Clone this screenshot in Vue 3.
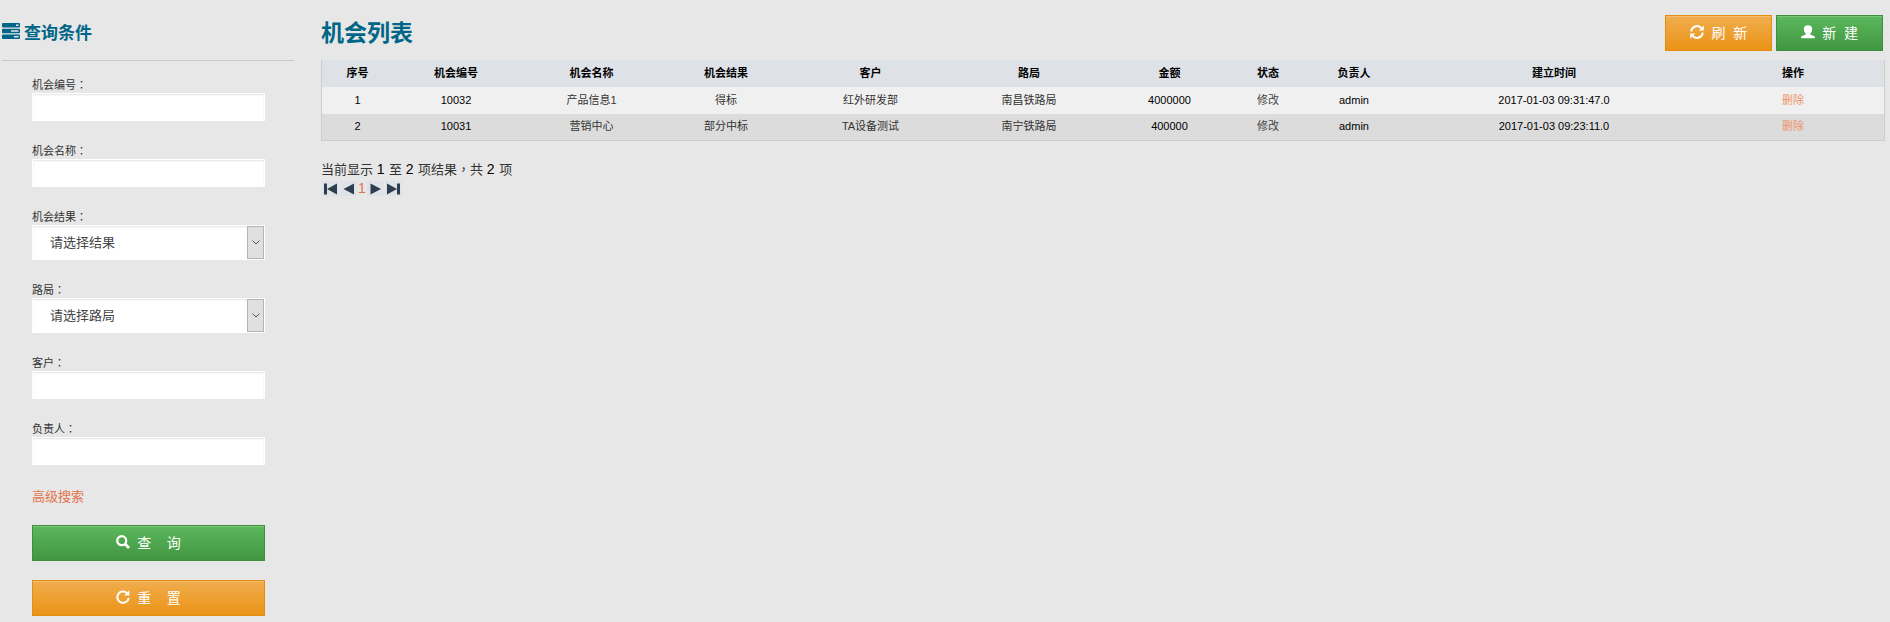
<script setup>
import { reactive } from 'vue'

const fields = [
  { id: 'code', label: '机会编号', type: 'text' },
  { id: 'name', label: '机会名称', type: 'text' },
  { id: 'result', label: '机会结果', type: 'select', placeholder: '请选择结果' },
  { id: 'bureau', label: '路局', type: 'select', placeholder: '请选择路局' },
  { id: 'customer', label: '客户', type: 'text' },
  { id: 'owner', label: '负责人', type: 'text' },
]

const query = reactive({ code: '', name: '', result: '', bureau: '', customer: '', owner: '' })

const columns = [
  { title: '序号', share: 71 },
  { title: '机会编号', share: 126 },
  { title: '机会名称', share: 145 },
  { title: '机会结果', share: 124 },
  { title: '客户', share: 165 },
  { title: '路局', share: 152 },
  { title: '金额', share: 129 },
  { title: '状态', share: 68 },
  { title: '负责人', share: 104 },
  { title: '建立时间', share: 296 },
  { title: '操作', share: 182 },
]
const total = columns.reduce((sum, c) => sum + c.share, 0)

const rows = [
  { no: 1, code: '10032', name: '产品信息1', result: '得标', customer: '红外研发部', bureau: '南昌铁路局', amount: '4000000', owner: 'admin', created: '2017-01-03 09:31:47.0' },
  { no: 2, code: '10031', name: '营销中心', result: '部分中标', customer: 'TA设备测试', bureau: '南宁铁路局', amount: '400000', owner: 'admin', created: '2017-01-03 09:23:11.0' },
]

function reset() {
  Object.keys(query).forEach((key) => { query[key] = '' })
}
</script>

<template>
  <div class="page">
    <aside class="sidebar">
      <h2 class="side-title">
        <svg class="title-icon" viewBox="0 0 18 16" aria-hidden="true">
          <rect x="0" y="0" width="18" height="4.500" rx="1" />
          <rect x="0" y="5.750" width="18" height="4.500" rx="1" />
          <rect x="0" y="11.500" width="18" height="4.500" rx="1" />
          <path class="hole" d="M14 1.500h2.500V3H14zM9 7.250h7.500v1.500H9zM12 13h4.500v1.500H12z" />
        </svg>
        <span>查询条件</span>
      </h2>
      <form class="filters" @submit.prevent>
        <div v-for="f in fields" :key="f.id" class="field">
          <label :for="f.id">{{ f.label }}<span class="punct">：</span></label>
          <input v-if="f.type === 'text'" :id="f.id" v-model="query[f.id]" type="text" class="control">
          <div v-else class="select-box">
            <select :id="f.id" v-model="query[f.id]" class="control">
              <option value="">{{ f.placeholder }}</option>
            </select>
            <span class="drop">
              <svg viewBox="0 0 8 5" aria-hidden="true"><path d="M.5.5 4 4 7.5.5" /></svg>
            </span>
          </div>
        </div>
        <a href="#" class="advanced">高级搜索</a>
        <button type="submit" class="btn green wide">
          <svg viewBox="0 0 14 14" aria-hidden="true">
            <circle cx="5.7" cy="5.7" r="4.5" fill="none" stroke="currentColor" stroke-width="2.2" />
            <path d="M9 9l4 4" stroke="currentColor" stroke-width="2.8" />
          </svg>
          <span>查&nbsp;&nbsp;&nbsp;&nbsp;询</span>
        </button>
        <button type="button" class="btn orange wide" @click="reset">
          <svg viewBox="0 0 14 14" aria-hidden="true">
            <path d="M10.800 2.800A5.700 5.700 0 1 0 12.700 8" fill="none" stroke="currentColor" stroke-width="2" />
            <path d="M13.400.2v5.300H8.100z" fill="currentColor" />
          </svg>
          <span>重&nbsp;&nbsp;&nbsp;&nbsp;置</span>
        </button>
      </form>
    </aside>

    <main class="content">
      <header class="top">
        <h1>机会列表</h1>
        <div class="actions">
          <button type="button" class="btn orange">
            <svg viewBox="0 0 14 14" aria-hidden="true">
              <path d="M1.200 6.400A5.800 5.800 0 0 1 11.200 3M12.800 7.600A5.800 5.800 0 0 1 2.800 11" fill="none" stroke="currentColor" stroke-width="2" />
              <path d="M13.800.4v5H8.800zM.2 13.600v-5h5z" fill="currentColor" />
            </svg>
            <span>刷&nbsp;&nbsp;新</span>
          </button>
          <button type="button" class="btn green">
            <svg viewBox="0 0 14 14" aria-hidden="true">
              <path d="M7 .3C9.900.3 11.300 1.900 11.200 4.400 11.100 6.200 10.400 7.500 9.300 8.400c-.2.900.2 1.300 1.100 1.600l2.500 1c.8.4 1.100 1 1.100 2.300H0c0-1.300.3-1.900 1.100-2.300l2.500-1c.9-.3 1.300-.7 1.100-1.600C3.600 7.500 2.900 6.200 2.800 4.400 2.700 1.900 4.100.3 7 .3z" fill="currentColor" />
            </svg>
            <span>新&nbsp;&nbsp;建</span>
          </button>
        </div>
      </header>

      <table class="grid">
        <colgroup>
          <col v-for="c in columns" :key="c.title" :style="{ width: (c.share / total) * 100 + '%' }">
        </colgroup>
        <thead>
          <tr><th v-for="c in columns" :key="c.title" scope="col">{{ c.title }}</th></tr>
        </thead>
        <tbody>
          <tr v-for="r in rows" :key="r.no">
            <td>{{ r.no }}</td>
            <td>{{ r.code }}</td>
            <td class="soft">{{ r.name }}</td>
            <td class="soft">{{ r.result }}</td>
            <td class="soft">{{ r.customer }}</td>
            <td class="soft">{{ r.bureau }}</td>
            <td>{{ r.amount }}</td>
            <td><a href="#" class="edit">修改</a></td>
            <td>{{ r.owner }}</td>
            <td>{{ r.created }}</td>
            <td><a href="#" class="remove">删除</a></td>
          </tr>
        </tbody>
      </table>

      <p class="summary">当前显示 <b>1</b> 至 <b>2</b> 项结果<span class="punct">，</span>共 <b>2</b> 项</p>
      <nav class="pager" aria-label="分页">
        <button type="button" aria-label="首页"><svg viewBox="0 0 13 12"><path d="M0 .5h3v11H0zM13 .5v11L3 6z" /></svg></button>
        <button type="button" aria-label="上一页"><svg viewBox="0 0 13 12"><path d="M12 .5v11L1.500 6z" /></svg></button>
        <a href="#">1</a>
        <button type="button" aria-label="下一页"><svg viewBox="0 0 13 12"><path d="M1.500.5v11L12 6z" /></svg></button>
        <button type="button" aria-label="末页"><svg viewBox="0 0 13 12"><path d="M10 .5h3v11h-3zM0 .5v11L10 6z" /></svg></button>
      </nav>
    </main>
  </div>
</template>

<style>
html,
body {
  background: #e7e7e7;
}
</style>

<style scoped>
.page {
  display: grid;
  grid-template-columns: 292px minmax(0, 1fr);
  gap: 27px;
  padding: 0 5px 0 2px;
  color: #333;
  font-family: "Liberation Sans", "Noto Sans CJK SC", sans-serif;
  font-size: 13px;
}
.punct {
  font-family: "Noto Sans CJK TC", sans-serif;
  line-height: 1;
}
.side-title {
  display: flex;
  align-items: center;
  gap: 4px;
  margin: 0;
  padding: 17px 0 9px;
  border-bottom: 1px solid #c6cad3;
  color: #006687;
  font-size: 17px;
  line-height: 34px;
}
.title-icon {
  width: 18px;
  height: 16px;
  margin-bottom: 6px;
  fill: currentColor;
}
.title-icon .hole {
  fill: #e7e7e7;
}
.filters {
  display: flex;
  flex-direction: column;
  padding: 16px 29px 6px 30px;
}
.field {
  display: flex;
  flex-direction: column;
  margin-bottom: 22px;
}
.field label {
  height: 16px;
  font-size: 11px;
  line-height: 16px;
}
.control {
  box-sizing: border-box;
  width: 100%;
  height: 28px;
  margin: 0;
  padding: 0 8px;
  border: 1px solid #fff;
  border-radius: 0;
  background: #fff;
  box-shadow: inset 0 1px 2px #e4e4e4;
  color: #444;
  font: inherit;
  outline: none;
}
.select-box {
  position: relative;
}
select.control {
  display: block;
  height: 35px;
  padding: 0 24px 0 17px;
  appearance: none;
}
.drop {
  position: absolute;
  top: 1px;
  right: 1px;
  bottom: 1px;
  display: flex;
  align-items: center;
  justify-content: center;
  box-sizing: border-box;
  width: 17px;
  border: 1px solid #b4b4b4;
  background: #e0e0e0;
  pointer-events: none;
}
.drop svg {
  width: 8px;
  height: 5px;
  fill: none;
  stroke: #555;
}
.advanced {
  align-self: flex-start;
  margin-bottom: 18px;
  color: #e2734a;
  line-height: 20px;
  text-decoration: none;
}
.btn {
  display: flex;
  align-items: center;
  justify-content: center;
  gap: 7px;
  box-sizing: border-box;
  height: 36px;
  margin: 0;
  padding: 0 24px 2px;
  border: 1px solid;
  color: #fff;
  font: inherit;
  font-size: 14px;
  cursor: pointer;
}
.btn svg {
  width: 14px;
  height: 14px;
}
.green {
  border-color: #3c8f3c;
  background: linear-gradient(#5cb85c, #419641);
  box-shadow: inset 0 1px 0 #7cc67c;
}
.orange {
  border-color: #e38d13;
  background: linear-gradient(#f0ad4e, #eb9316);
  box-shadow: inset 0 1px 0 #f3bd71;
}
.wide + .wide {
  margin-top: 19px;
}
.top {
  display: flex;
  justify-content: space-between;
  padding: 15px 2px 9px 0;
}
.top h1 {
  margin: 0;
  color: #006687;
  font-size: 23px;
  line-height: 36px;
}
.actions {
  display: flex;
  gap: 4px;
}
.grid {
  width: 100%;
  border-collapse: separate;
  border-spacing: 0;
  table-layout: fixed;
  border: solid #ccc;
  border-width: 0 1px 1px;
  color: #000;
  font-size: 11px;
  line-height: 16px;
  text-align: center;
}
.grid th,
.grid td {
  box-sizing: border-box;
  height: 27px;
  padding: 0 0 2px;
}
.grid th {
  background: #dee2e7;
}
.grid td {
  background: #f0f0f0;
}
.grid tr:nth-child(even) td {
  height: 26px;
  background: #dcdcdc;
}
.grid .soft {
  color: #333;
}
.grid a {
  text-decoration: none;
}
.edit {
  color: #444;
}
.remove {
  color: #ee9468;
}
.summary {
  height: 20px;
  margin: 18px 0 0;
  line-height: 20px;
}
.summary b {
  margin-right: 1px;
  color: #000;
  font-size: 14px;
  font-weight: 400;
}
.pager {
  display: flex;
  gap: 1px;
  padding: 2px 1px;
}
.pager button {
  display: flex;
  align-items: center;
  justify-content: center;
  width: 17px;
  height: 15px;
  padding: 0;
  border: 0;
  background: #dfe3e8;
}
.pager svg {
  width: 13px;
  height: 12px;
  fill: #2c3e50;
}
.pager a {
  color: #e2734a;
  font-size: 14px;
  line-height: 15px;
  text-decoration: none;
}
</style>
